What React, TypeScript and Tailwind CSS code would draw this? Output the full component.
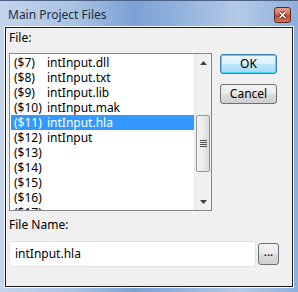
import React from "react";

const rows = [
  { id: "($7)", name: "intInput.dll" },
  { id: "($8)", name: "intInput.txt" },
  { id: "($9)", name: "intInput.lib" },
  { id: "($10)", name: "intInput.mak" },
  { id: "($11)", name: "intInput.hla", selected: true },
  { id: "($12)", name: "intInput" },
  { id: "($13)", name: "" },
  { id: "($14)", name: "" },
  { id: "($15)", name: "" },
  { id: "($16)", name: "" },
  { id: "($17)", name: "" },
];

export default function App() {
  return (
    <div
      className="w-[298px] h-[292px] flex flex-col overflow-hidden bg-[linear-gradient(90deg,#c4d5eb_0%,#a9c2e3_25%,#7ba1d5_45%,#95b4dd_62%,#b4cae6_80%,#8fafdc_100%)] text-[12px] text-black"
      style={{ fontFamily: '"Noto Sans", "DejaVu Sans", sans-serif' }}
    >
      {/* Title bar */}
      <div className="h-[27px] shrink-0 flex items-center pl-[8px] pr-[7px] border-t border-[#4d6185]">
        <span className="flex-1 text-[12px] text-[#1e2b3c] mt-[1px]">Main Project Files</span>
        <div className="w-[17px] h-[16px] rounded-[3px] border border-[#5a2a24] bg-[linear-gradient(180deg,#e6a08f_0%,#d66c55_45%,#c4452e_55%,#d9745c_100%)] flex items-center justify-center mt-[1px]">
          <svg width="9" height="8" viewBox="0 0 9 8">
            <path d="M1.5 1 L7.5 7 M7.5 1 L1.5 7" stroke="#3b1510" strokeWidth="3" />
            <path d="M1.5 1 L7.5 7 M7.5 1 L1.5 7" stroke="#ffffff" strokeWidth="1.6" />
          </svg>
        </div>
      </div>

      {/* Client area */}
      <div className="flex-1 mx-[5px] mb-[5px] border border-[#1c1c1c] shadow-[0_0_0_1px_#f6f8fb] bg-[#f0f0f0] flex flex-col px-[3px]">
        <div className="h-[25px] leading-[16px] pt-[2px]">File:</div>
        <div className="flex gap-[8px]">
          {/* List box */}
          <div className="w-[203px] h-[158px] border border-[#828790] bg-white flex overflow-hidden">
            <div className="flex-1 pt-[1px] pl-[1px] overflow-hidden">
              {rows.map((r) => (
                <div
                  key={r.id}
                  className={`h-[15px] flex items-center leading-[15px] pl-[3px] ${r.selected ? "bg-[#3399ff] text-white" : ""}`}
                >
                  <span className="w-[33px]">{r.id}</span>
                  <span>{r.name}</span>
                </div>
              ))}
            </div>
            {/* Scrollbar */}
            <div className="w-[17px] bg-[#f0f0f0] border-l border-[#e6e6e6] flex flex-col">
              <div className="h-[17px] flex items-center justify-center">
                <svg width="7" height="4" viewBox="0 0 7 4">
                  <path d="M0 4 L3.5 0 L7 4 Z" fill="#404040" />
                </svg>
              </div>
              <div className="h-[44px]" />
              <div className="h-[57px] mx-[1px] rounded-[2px] border border-[#979797] bg-[linear-gradient(90deg,#f2f2f2_0%,#ebebeb_50%,#d9d9d9_100%)] flex flex-col items-center justify-center gap-[1px]">
                <div className="w-[7px] h-[1px] bg-[#505050]" />
                <div className="w-[7px] h-[1px] bg-[#505050]" />
                <div className="w-[7px] h-[1px] bg-[#505050]" />
                <div className="w-[7px] h-[1px] bg-[#505050]" />
              </div>
              <div className="flex-1" />
              <div className="h-[17px] flex items-center justify-center">
                <svg width="7" height="4" viewBox="0 0 7 4">
                  <path d="M0 0 L3.5 4 L7 0 Z" fill="#404040" />
                </svg>
              </div>
            </div>
          </div>
          {/* Buttons */}
          <div className="flex flex-col gap-[10px] pt-[1px]">
            <button className="w-[57px] h-[20px] rounded-[3px] border border-[#3c7fb1] shadow-[inset_0_0_0_1px_#48d8fb] bg-[linear-gradient(180deg,#eaf6fd_0%,#d9f0fc_50%,#bee6fd_50%,#a7d9f5_100%)] text-[12px] leading-none">
              OK
            </button>
            <button className="w-[57px] h-[20px] rounded-[3px] border border-[#707070] bg-[linear-gradient(180deg,#f2f2f2_0%,#ebebeb_50%,#dddddd_50%,#cfcfcf_100%)] text-[12px] leading-none">
              Cancel
            </button>
          </div>
        </div>
        <div className="h-[30px] flex items-end pb-[7px]">File Name:</div>
        <div className="flex items-center gap-[2px]">
          <div className="w-[247px] h-[26px] border border-[#e3e3e3] rounded-[2px] bg-white flex items-center pl-[5px]">
            intInput.hla
          </div>
          <button className="w-[21px] h-[22px] rounded-[3px] border border-[#707070] bg-[linear-gradient(180deg,#f2f2f2_0%,#ebebeb_50%,#dddddd_50%,#cfcfcf_100%)] text-[12px] leading-none flex items-end justify-center pb-[6px]">
            ...
          </button>
        </div>
      </div>
    </div>
  );
}
